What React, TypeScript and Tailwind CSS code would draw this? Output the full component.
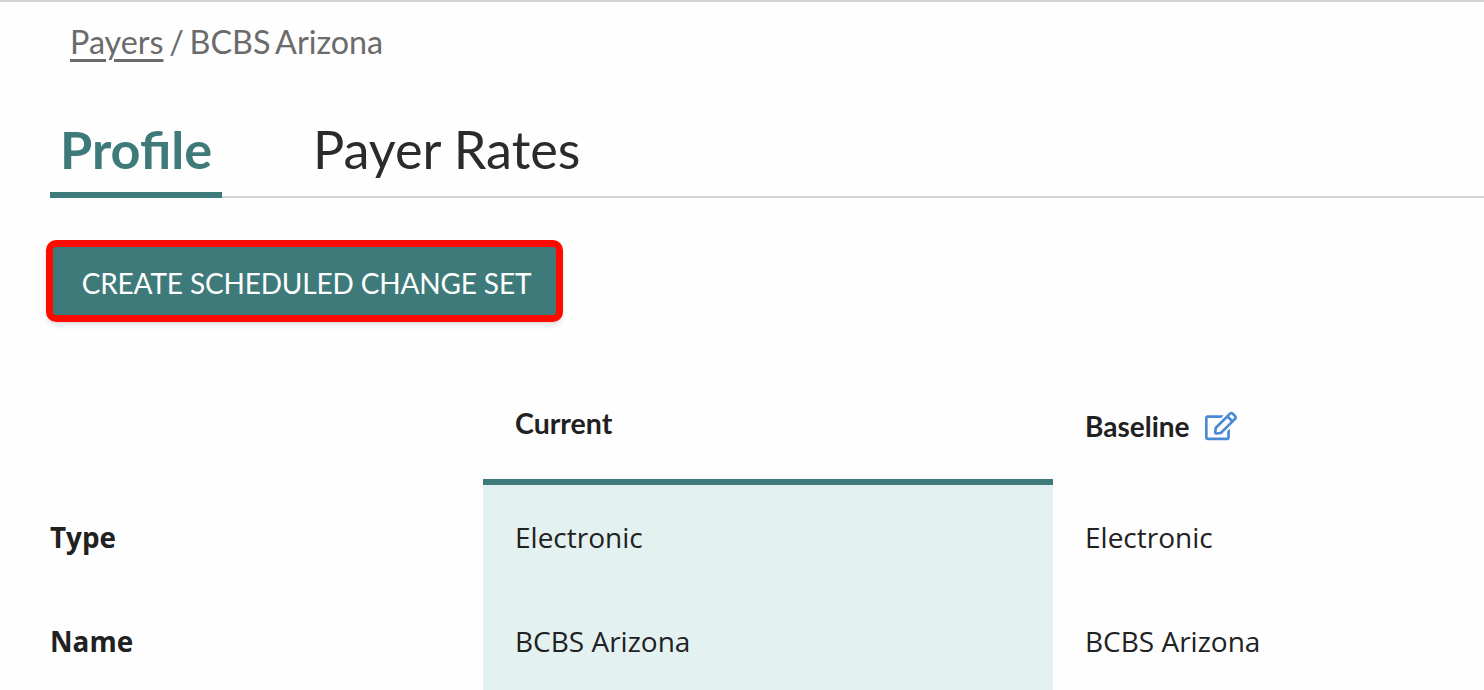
import { FaRegEdit } from 'react-icons/fa'

const rows = [
  { label: 'Type', current: 'Electronic', baseline: 'Electronic' },
  { label: 'Name', current: 'BCBS Arizona', baseline: 'BCBS Arizona' },
]

export default function App() {
  return (
    <div className="h-[690px] w-[1484px] overflow-hidden border-t-2 border-[#cdd3d2] bg-[#fefefe] font-['Lato',sans-serif] text-[#212121]">
      {/* Breadcrumb */}
      <div className="pl-[70px] pt-[20px] text-[32.3px] leading-[40px] text-[#6b6b6b] [word-spacing:-2.5px]">
        <span className="underline decoration-[3px] underline-offset-[5px]">Payers</span> / BCBS Arizona
      </div>

      {/* Tabs */}
      <div className="ml-[50px] mt-[52px] flex border-b-2 border-[#d3d8d7]">
        <div className="-mb-[2px] w-[172px] border-b-[6px] border-[#3f7a7b] pl-[10px] pb-[8px] text-[52.2px] font-bold leading-[70px] text-[#3f7a7b]">
          Profile
        </div>
        <div className="ml-[91px] pb-[8px] text-[52.2px] leading-[70px] text-[#2b2b2b]">Payer Rates</div>
      </div>

      {/* Action */}
      <div className="ml-[46px] mt-[42px]">
        <button className="h-[82px] w-[517px] rounded-[10px] border-[7px] border-[#fe0b00] bg-[#3f7a7b] pl-[4px] pt-[3px] text-[28px] tracking-[-0.15px] text-white shadow-md">
          CREATE SCHEDULED CHANGE SET
        </button>
      </div>

      {/* Comparison table */}
      <div className="ml-[50px] mt-[55px] grid grid-cols-[433px_570px_1fr]">
        <div />
        <div className="h-[108px] border-b-[6px] border-[#3f7a7b] pl-[32px] pt-[26px] text-[28.5px] font-bold leading-[40px]">
          Current
        </div>
        <div className="flex items-start gap-[15px] pl-[32px] pt-[29px] text-[28px] font-bold leading-[40px]">
          Baseline
          <FaRegEdit className="mt-[4px] text-[32px] text-[#4a8ad4]" />
        </div>
        {rows.map((row) => (
          <div key={row.label} className="contents font-['Open_Sans',sans-serif]">
            <div className="flex h-[104px] items-center pt-[2px] text-[27.8px] font-bold">{row.label}</div>
            <div className="flex h-[104px] items-center bg-[#e3f1f1] pl-[32px] text-[28px]">{row.current}</div>
            <div className="flex h-[104px] items-center pl-[32px] text-[28px]">{row.baseline}</div>
          </div>
        ))}
      </div>
    </div>
  )
}
